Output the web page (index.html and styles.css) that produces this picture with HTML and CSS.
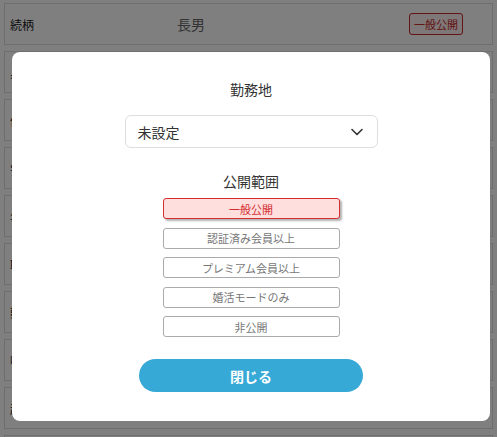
FILE: index.html
```html
<!DOCTYPE html>
<html lang="ja">
<head>
<meta charset="utf-8">
<link rel="stylesheet" href="styles.css">
</head>
<body>
<div class="list">
  <div class="row">
    <span class="row-label">続柄</span>
    <span class="row-value">長男</span>
    <span class="badge">一般公開</span>
  </div>
  <div class="row"><span class="row-label">身長</span></div>
  <div class="row"><span class="row-label">体型</span></div>
  <div class="row"><span class="row-label">学歴</span></div>
  <div class="row"><span class="row-label">年収</span></div>
  <div class="row"><span class="row-label">職業</span></div>
  <div class="row"><span class="row-label">勤務地</span></div>
  <div class="row"><span class="row-label">喫煙</span></div>
  <div class="row"><span class="row-label">趣味</span></div>
  <div class="row"></div>
</div>

<div class="overlay">
  <div class="modal">
    <div class="title">勤務地</div>
    <div class="select">
      <span>未設定</span>
      <svg class="chevron" width="12" height="8" viewBox="0 0 12 8"><polyline points="1,1.5 6,6.5 11,1.5" fill="none" stroke="#333" stroke-width="1.6" stroke-linecap="round" stroke-linejoin="round"/></svg>
    </div>
    <div class="subtitle">公開範囲</div>
    <div class="options">
      <div class="opt active">一般公開</div>
      <div class="opt">認証済み会員以上</div>
      <div class="opt">プレミアム会員以上</div>
      <div class="opt">婚活モードのみ</div>
      <div class="opt">非公開</div>
    </div>
    <div class="close">閉じる</div>
  </div>
</div>
</body>
</html>
```

FILE: styles.css
```css
html, body {
  margin: 0;
  padding: 0;
  background: #fff;
  font-family: "Noto Sans CJK JP", "Noto Sans", sans-serif;
  color: #333;
  overflow: hidden;
  height: 437px;
}
.list {
  padding: 3px 4px 0 4px;
  display: flex;
  flex-direction: column;
  gap: 6px;
}
.row {
  height: 42px;
  box-sizing: border-box;
  border: 1px solid #ddd;
  display: flex;
  align-items: center;
  padding: 0 5px;
  flex-shrink: 0;
}
.row-label {
  font-size: 12px;
  color: #222;
  width: 150px;
}
.row-value {
  font-size: 14px;
  color: #666;
  flex: 1;
  padding-left: 17px;
}
.badge {
  font-size: 11px;
  color: #c62828;
  border: 1px solid #c62828;
  background: #fff0f0;
  border-radius: 3px;
  padding: 1px 4px;
  line-height: 18px;
  margin-right: 24px;
}
.overlay {
  position: fixed;
  inset: 0;
  background: rgba(0, 0, 0, 0.5);
  display: flex;
  align-items: flex-start;
  padding: 52px 7px 0 12px;
}
.modal {
  background: #fff;
  border-radius: 8px;
  width: 478px;
  height: 369px;
  box-sizing: border-box;
  padding-top: 28px;
  display: flex;
  flex-direction: column;
  align-items: center;
}
.title {
  font-size: 14px;
  line-height: 18px;
  color: #333;
}
.select {
  margin-top: 17px;
  width: 253px;
  height: 33px;
  box-sizing: border-box;
  border: 1px solid #ddd;
  border-radius: 6px;
  display: flex;
  align-items: center;
  justify-content: space-between;
  padding: 0 14px 0 12px;
  font-size: 14px;
  color: #333;
}
.subtitle {
  margin-top: 24px;
  font-size: 14px;
  line-height: 18px;
  color: #333;
}
.options {
  margin-top: 8px;
  display: flex;
  flex-direction: column;
  gap: 8.5px;
}
.opt {
  width: 177px;
  height: 21px;
  box-sizing: border-box;
  border: 1px solid #aaa;
  border-radius: 3px;
  font-size: 11px;
  color: #777;
  display: flex;
  align-items: center;
  justify-content: center;
}
.opt.active {
  background: #ffdede;
  border-color: #d32f2f;
  color: #d32f2f;
  box-shadow: 2px 2px 2px rgba(0, 0, 0, 0.3);
}
.close {
  margin-top: 22px;
  width: 224px;
  height: 33px;
  border-radius: 17px;
  background: #36a9d6;
  color: #fff;
  font-size: 14px;
  font-weight: bold;
  display: flex;
  align-items: center;
  justify-content: center;
}
```
